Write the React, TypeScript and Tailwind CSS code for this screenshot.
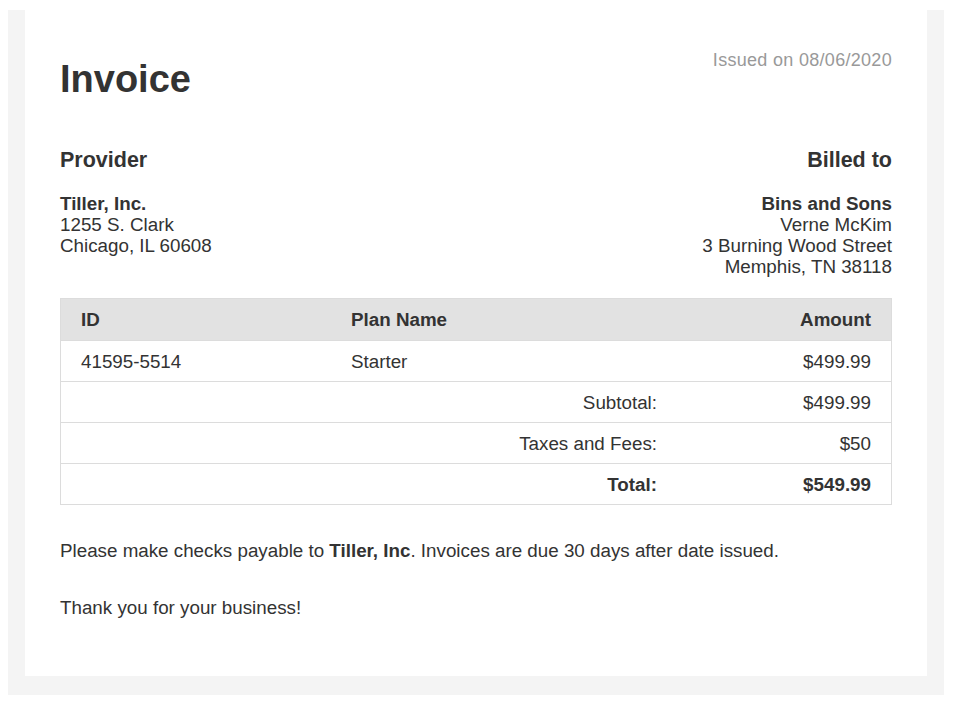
export default function App() {
  const row = "grid grid-cols-[270px_346px_1fr] h-[41px] items-center border-t border-[#dcdcdc]";
  return (
    <div className="w-[956px] h-[706px] bg-white pt-[10px] pl-[8px]" style={{ fontFamily: '"Liberation Sans", Arial, sans-serif' }}>
      <div className="w-[936px] h-[685px] bg-[#f4f4f4] px-[17px] pb-[19px]">
        <div className="h-full bg-white px-[35px] pt-[40px] text-[#333] text-[18.8px] leading-[21px]">
          <div className="flex justify-between items-start">
            <h1 className="text-[38px] leading-[54px] font-bold mt-[2px]">Invoice</h1>
            <div className="text-[#999] text-[18px] tracking-[0.3px]">Issued on 08/06/2020</div>
          </div>
          <div className="flex justify-between mt-[42px]">
            <div>
              <div className="text-[21.5px] font-bold leading-[24px]">Provider</div>
              <div className="mt-[21px]">
                <div className="font-bold">Tiller, Inc.</div>
                <div>1255 S. Clark</div>
                <div>Chicago, IL 60608</div>
              </div>
            </div>
            <div className="text-right">
              <div className="text-[21.5px] font-bold leading-[24px]">Billed to</div>
              <div className="mt-[21px]">
                <div className="font-bold">Bins and Sons</div>
                <div>Verne McKim</div>
                <div>3 Burning Wood Street</div>
                <div>Memphis, TN 38118</div>
              </div>
            </div>
          </div>
          <div className="mt-[21px] border border-[#dcdcdc] border-t-0">
            <div className="grid grid-cols-[270px_346px_1fr] h-[42px] items-center bg-[#e2e2e2] font-bold border-t border-[#dcdcdc]">
              <div className="px-[20px]">ID</div>
              <div className="px-[20px]">Plan Name</div>
              <div className="px-[20px] text-right">Amount</div>
            </div>
            <div className={row}>
              <div className="px-[20px]">41595-5514</div>
              <div className="px-[20px]">Starter</div>
              <div className="px-[20px] text-right">$499.99</div>
            </div>
            <div className={row}>
              <div className="col-span-2 px-[20px] text-right">Subtotal:</div>
              <div className="px-[20px] text-right">$499.99</div>
            </div>
            <div className={row}>
              <div className="col-span-2 px-[20px] text-right">Taxes and Fees:</div>
              <div className="px-[20px] text-right">$50</div>
            </div>
            <div className={row + " font-bold"}>
              <div className="col-span-2 px-[20px] text-right">Total:</div>
              <div className="px-[20px] text-right">$549.99</div>
            </div>
          </div>
          <p className="mt-[35px]">
            Please make checks payable to <b>Tiller, Inc</b>. Invoices are due 30 days after date issued.
          </p>
          <p className="mt-[36px]">Thank you for your business!</p>
        </div>
      </div>
    </div>
  );
}
